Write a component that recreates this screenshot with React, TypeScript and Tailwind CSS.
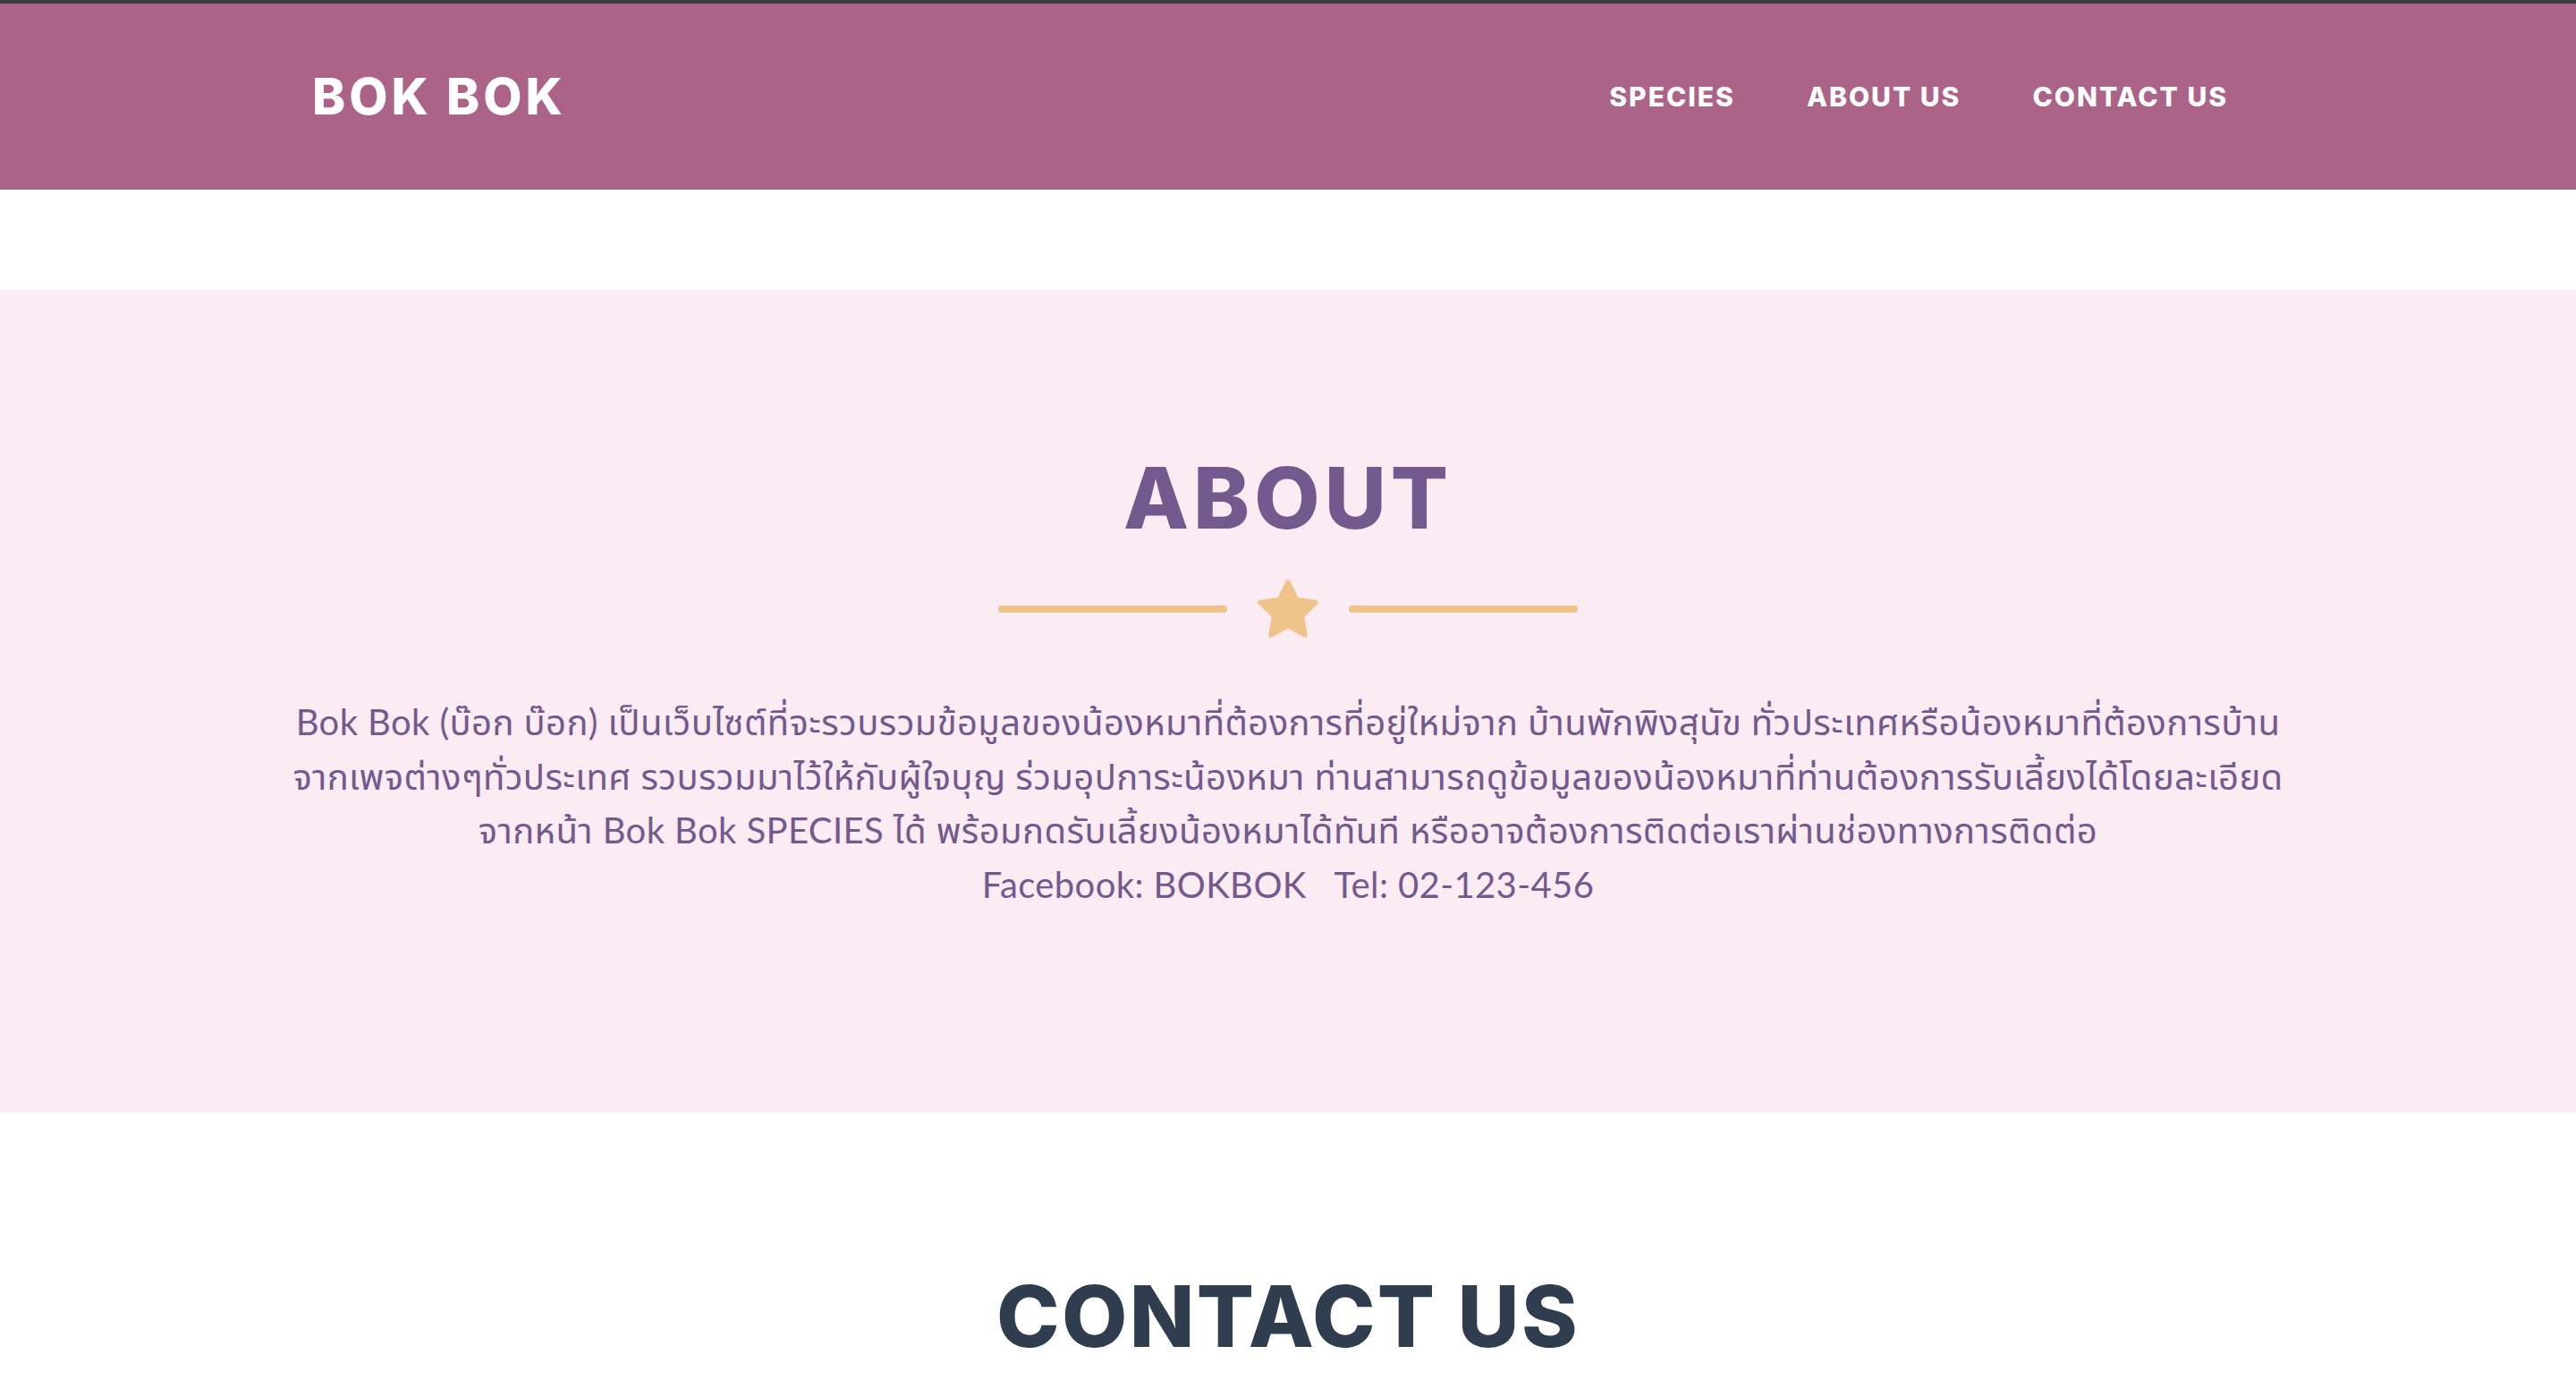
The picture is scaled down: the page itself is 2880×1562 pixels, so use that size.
import { Fragment } from 'react';

const navLinks = ['SPECIES', 'ABOUT US', 'CONTACT US'];

const aboutLines = [
  'Bok Bok (บ๊อก บ๊อก) เป็นเว็บไซต์ที่จะรวบรวมข้อมูลของน้องหมาที่ต้องการที่อยู่ใหม่จาก บ้านพักพิงสุนัข ทั่วประเทศหรือน้องหมาที่ต้องการบ้าน',
  'จากเพจต่างๆทั่วประเทศ รวบรวมมาไว้ให้กับผู้ใจบุญ ร่วมอุปการะน้องหมา ท่านสามารถดูข้อมูลของน้องหมาที่ท่านต้องการรับเลี้ยงได้โดยละเอียด',
  'จากหน้า Bok Bok SPECIES ได้ พร้อมกดรับเลี้ยงน้องหมาได้ทันที หรืออาจต้องการติดต่อเราผ่านช่องทางการติดต่อ',
];

const heading = "font-['Inter',sans-serif] font-extrabold";
const body = "font-['Lato','Noto_Sans_Thai','Noto_Sans',sans-serif]";

const StarIcon = () => (
  <svg width="68" height="65" viewBox="1.7 1.8 20.6 19.7" className="text-[#efc48a]">
    <polygon
      points="12,2.6 14.94,8.55 21.51,9.51 16.76,14.15 17.88,20.69 12,17.6 6.12,20.69 7.24,14.15 2.49,9.51 9.06,8.55"
      fill="currentColor"
      stroke="currentColor"
      strokeWidth="1.5"
      strokeLinejoin="round"
    />
  </svg>
);

const App = () => {
  return (
    <div className="min-h-screen bg-white">
      {/* top edge */}
      <div className="h-[4px] bg-[#3b3b3d]" />

      {/* Navbar */}
      <nav className="bg-[#ab6387] h-[208px]">
        <div className="h-full flex items-center justify-between pl-[349px] pr-[389px]">
          <a className={`${heading} text-white text-[56px] leading-none tracking-[4px]`}>BOK BOK</a>
          <ul className="flex items-center gap-[80px]">
            {navLinks.map((link) => (
              <li key={link} className={`${heading} text-white text-[30px] leading-none tracking-[2px]`}>
                {link}
              </li>
            ))}
          </ul>
        </div>
      </nav>

      {/* About */}
      <section className="mt-[112px] bg-[#fbebf3] h-[920px] pt-[185px]">
        <h2 className={`${heading} text-[#74598f] text-[95px] leading-none text-center tracking-[5px]`}>ABOUT</h2>

        <div className="mt-[44px] flex items-center justify-center gap-[34px]">
          <div className="w-[256px] h-[8px] rounded-full bg-[#efc48a]" />
          <StarIcon />
          <div className="w-[256px] h-[8px] rounded-full bg-[#efc48a]" />
        </div>

        <p className={`${body} mt-[64px] text-center text-[#74598f] text-[40px] leading-[60.5px] tracking-[0.4px]`}>
          {aboutLines.map((line) => (
            <Fragment key={line}>
              <span className="block whitespace-nowrap">{line}</span>
            </Fragment>
          ))}
          <span className="block whitespace-pre">Facebook: BOKBOK   Tel: 02-123-456</span>
        </p>
      </section>

      {/* Contact */}
      <section className="pt-[180px] pb-[200px]">
        <h2 className={`${heading} text-[#2f3d4f] text-[95px] leading-none text-center tracking-[2.3px]`}>CONTACT US</h2>
      </section>
    </div>
  );
};

export default App;
